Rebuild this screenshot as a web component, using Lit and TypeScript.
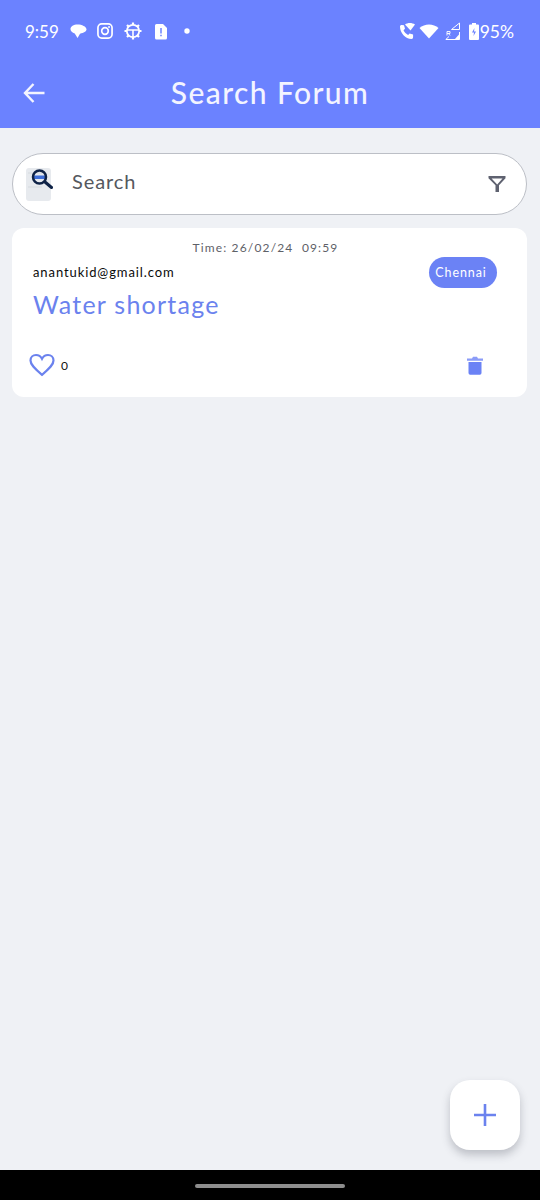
import { LitElement, html, css, svg } from "lit";
import { customElement } from "lit/decorators.js";

const W = "#fff";

@customElement("app-root")
export class AppRoot extends LitElement {
  static styles = css`
    :host { display: block; width: 540px; height: 1200px; font-family: Lato, "Open Sans", sans-serif; }
    .page { position: relative; display: flex; flex-direction: column; height: 1200px; background: #eff1f5; overflow: hidden; }
    svg { display: block; flex: none; }
    header { height: 128px; background: #6b82ff; color: #fff; display: flex; flex-direction: column; flex: none; }
    .status { height: 62px; display: flex; align-items: center; padding: 0 26px 0 25px; font-size: 17px; }
    .status .left, .status .right { display: flex; align-items: center; }
    .status .left { flex: 1; }
    .time { width: 45px; letter-spacing: 0; }
    .left svg { margin-right: 10px; }
    .right svg { margin-right: 5px; }
    .right .pct { margin-left: -2px; font-size: 17.5px; }
    .bar { height: 62px; display: grid; grid-template-columns: 1fr auto 1fr; align-items: center; padding: 0 21px; }
    .title { font-size: 30px; font-weight: 500; letter-spacing: 1.4px; color: #f3f4ff; margin-top: -2px; }
    main { flex: 1; display: flex; flex-direction: column; gap: 13px; padding: 25px 13px 0 12px; }
    .search { height: 62px; box-sizing: border-box; border: 1px solid #bcbfc6; border-radius: 31px; background: #fff; display: flex; align-items: center; padding: 0 20px 0 12px; }
    .search .ph { flex: 1; margin-left: 19px; margin-top: -7px; font-size: 20px; letter-spacing: 0.9px; color: #55585e; }
    .card { background: #fff; border-radius: 12px; height: 169px; box-sizing: border-box; padding: 13px 30px 0 21px; display: flex; flex-direction: column; }
    .tm { text-align: center; font-size: 12px; line-height: 14px; letter-spacing: 1.15px; color: #5e6168; margin-right: -1px; }
    .row { display: flex; align-items: center; justify-content: space-between; height: 31px; margin-top: 2px; }
    .email { font-size: 13px; letter-spacing: 0.9px; color: #0a0a0a; margin-top: -2px; }
    .chip { width: 68px; height: 31px; border-radius: 15.5px; background: #6b82f5; color: #fff; font-size: 12.5px; letter-spacing: 0.9px; display: flex; align-items: center; justify-content: center; padding-right: 4px; box-sizing: border-box; }
    .subject { font-size: 25px; line-height: 30px; letter-spacing: 1.25px; color: #6b82ee; margin-top: 1px; }
    .foot { display: flex; align-items: center; margin: 31px 14px 0 -4px; height: 30px; }
    .likes { flex: 1; margin-left: 6px; font-size: 12px; color: #111; }
    .nav { height: 30px; background: #000; display: flex; align-items: center; justify-content: center; flex: none; }
    .pill { width: 150px; height: 4px; margin-top: 1px; border-radius: 2px; background: #8d8d8d; }
    .fab { position: absolute; left: 450px; top: 1080px; width: 70px; height: 70px; border-radius: 20px; background: #fff; display: flex; align-items: center; justify-content: center; box-shadow: 0 5px 9px rgba(60, 65, 80, 0.28); }
  `;

  private statusLeft() {
    return html`
      <svg width="17" height="16" viewBox="0 0 18 16"><path d="M8 1C3.800 1 .5 3 .5 6c0 2.400 2 4 4.500 4.600L8 15.500l2.600-4.700C14.500 10.200 17.500 8.600 17.500 6.200 17.500 3.200 12.500 1 8 1z" fill="${W}"/></svg>
      <svg width="16" height="16" viewBox="0 0 17 17" fill="none" stroke="${W}" style="margin-right:11px"><rect x="1" y="1" width="15" height="15" rx="4" stroke-width="1.800"/><circle cx="8.500" cy="8.500" r="3.500" stroke-width="1.800"/><circle cx="12.800" cy="4.200" r="1" fill="${W}" stroke="none"/></svg>
      <svg width="18" height="18" viewBox="0 0 18 18" fill="none" stroke="${W}" style="margin-right:12px"><circle cx="9" cy="9" r="6.200" stroke-width="1.800"/><path d="M9 .5v2.500M9 15v2.500M.5 9H3M15 9h2.500M3 3l1.800 1.800M13.200 13.200L15 15M15 3l-1.800 1.800M4.800 13.200L3 15" stroke-width="2.200"/><path d="M3 8h12M9 8v7" stroke-width="1.600"/></svg>
      <svg width="14" height="17" viewBox="0 0 14 17"><path d="M2.500 1H9l4 4v10a1.500 1.500 0 0 1-1.500 1.500h-9A1.500 1.500 0 0 1 1 15V2.500A1.500 1.500 0 0 1 2.500 1z" fill="${W}"/><path d="M7 5v5.500M7 11.800v1.500" stroke="#6b82ff" stroke-width="1.500"/></svg>
      <svg width="6" height="6" viewBox="0 0 6 6" style="margin-left:6px"><circle cx="3" cy="3" r="2.700" fill="${W}"/></svg>
    `;
  }

  private statusRight() {
    return html`
      <svg width="17" height="18" viewBox="0 0 17 18" style="margin-right:3px"><path d="M1 4.500C1 3.500 1.800 3 2.800 3L5 3.300 6 6.800 4.500 8.300c1 2 2.600 3.600 4.600 4.600l1.500-1.500 3.500 1V15c0 1-.5 2-1.600 2C6.500 17 1 11 1 4.500z" fill="${W}"/><path d="M6 2.500C8.500.5 13 .5 16 2.500L11.500 8.500z" fill="${W}"/></svg>
      <svg width="20" height="16" viewBox="0 0 20 16" style="margin-right:6px"><path d="M.5 5C5.500.3 14.500.3 19.500 5L10 15.500z" fill="${W}"/></svg>
      <svg width="15" height="18" viewBox="0 0 15 18" fill="none" stroke="${W}" style="margin-right:9px"><path d="M14.500 1v6.500H6.500z" stroke-width="1"/><path d="M14.500 10v7.500H.8L4 14.500" stroke-width="1"/><path d="M14 12.500L9.500 17.500h5z" fill="${W}" stroke="none"/><path d="M2 13.500V9.500h3v2H2M3.500 11.500L5 13.500" stroke-width=".9"/></svg>
      <svg width="10" height="17" viewBox="0 0 10 17" style="margin-right:3px"><path d="M3 0h4v1.500h2a1 1 0 0 1 1 1V16a1 1 0 0 1-1 1H1a1 1 0 0 1-1-1V2.500a1 1 0 0 1 1-1h2z" fill="${W}"/><path d="M5.500 5L3 9.500h2L4.500 13 7 8.500H5z" fill="#6b82ff"/></svg>
      <span class="pct">95%</span>
    `;
  }

  private searchIcon() {
    return svg`
      <rect x="1" y="14" width="25" height="33" rx="3" fill="#e7eaee"/>
      <path d="M3 19h18M3 33h14" stroke="#dcdfe4" stroke-width="1.500"/>
      <rect x="8" y="21.500" width="13" height="3.500" fill="#3f6fd8"/>
      <circle cx="14.500" cy="23" r="6.500" fill="none" stroke="#0e2246" stroke-width="2.500"/>
      <path d="M20 28l6.500 5.500" stroke="#0e2246" stroke-width="3" stroke-linecap="round"/>
    `;
  }

  render() {
    return html`
      <div class="page">
        <header>
          <div class="status">
            <div class="left"><span class="time">9:59</span>${this.statusLeft()}</div>
            <div class="right">${this.statusRight()}</div>
          </div>
          <div class="bar">
            <svg width="26" height="24" viewBox="0 0 26 24" fill="none" stroke="#f3f4ff" stroke-width="2.400"><path d="M23.500 12H4M12.500 3L4 12l8.500 9"/></svg>
            <div class="title">Search Forum</div>
            <span></span>
          </div>
        </header>
        <main>
          <div class="search">
            <svg width="28" height="60" viewBox="0 0 28 60">${this.searchIcon()}</svg>
            <span class="ph">Search</span>
            <svg width="18" height="18" viewBox="0 0 18 18"><path d="M.5 1h17v2.200L11 10.200V17H7.500v-6.800L.5 3.200zM3.600 3.400L9.200 9.500 14.500 3.400z" fill="#5f6270" fill-rule="evenodd"/></svg>
          </div>
          <div class="card">
            <div class="tm">Time: 26/02/24&nbsp; 09:59</div>
            <div class="row">
              <span class="email">anantukid@gmail.com</span>
              <span class="chip">Chennai</span>
            </div>
            <div class="subject">Water shortage</div>
            <div class="foot">
              <svg width="26" height="24" viewBox="0 0 26 24"><path d="M13 21.800C5 15 1.500 11.500 1.500 7.500 1.500 4.300 4 2 7 2c2.400 0 4.700 1.300 6 3.800C14.300 3.300 16.600 2 19 2c3 0 5.500 2.300 5.500 5.500 0 4-3.500 7.500-11.500 14.300z" fill="none" stroke="#6b82ee" stroke-width="2.200"/></svg>
              <span class="likes">0</span>
              <svg width="16" height="20" viewBox="0 0 16 20"><path d="M0 3.500h5L6 1.800h4l1 1.700h5v2.300H0z" fill="#8b9cf8"/><path d="M1.500 7h13v11a1.700 1.700 0 0 1-1.700 1.700H3.200A1.700 1.700 0 0 1 1.500 18z" fill="#6b82f5"/></svg>
            </div>
          </div>
        </main>
        <div class="nav"><div class="pill"></div></div>
        <div class="fab">
          <svg width="24" height="24" viewBox="0 0 24 24"><path d="M12 1v22M1 12h22" stroke="#6b82ee" stroke-width="2.600" fill="none"/></svg>
        </div>
      </div>
    `;
  }
}
